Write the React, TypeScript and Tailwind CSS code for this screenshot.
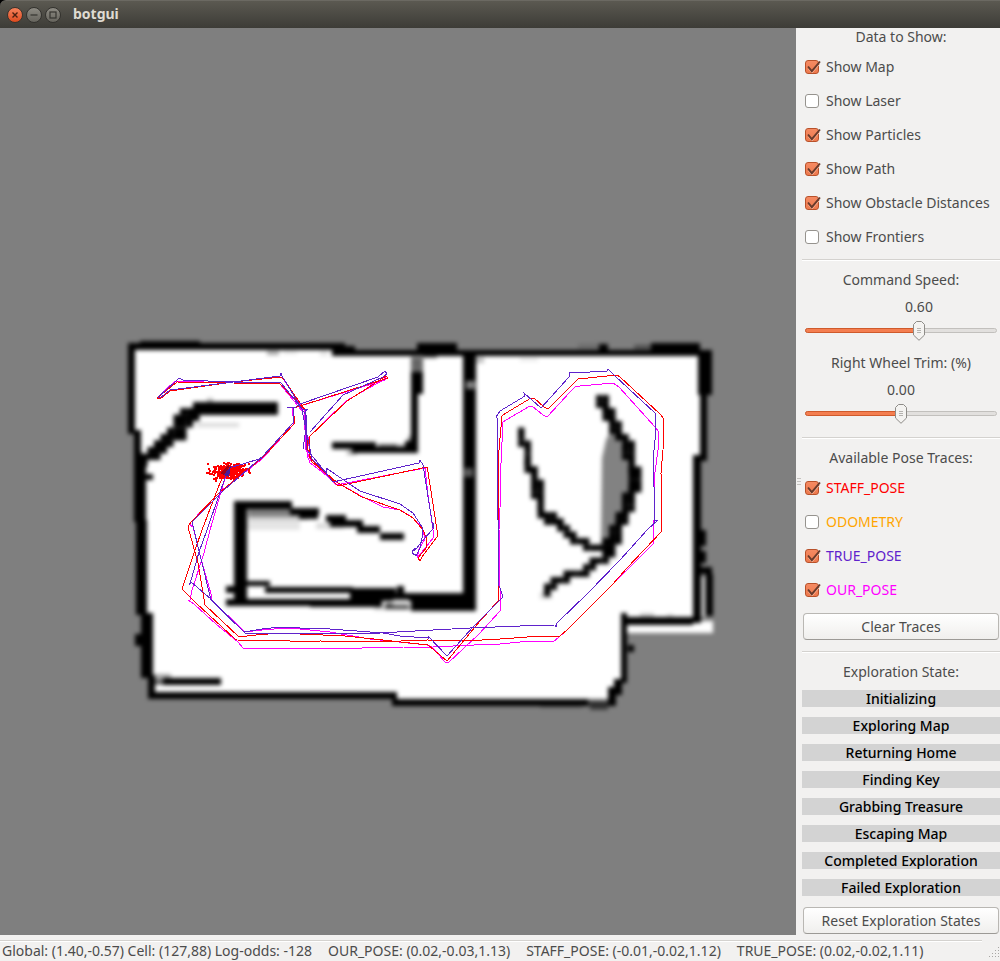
import { useState } from "react";

type Point = [number, number];
type Rect = [number, number, number, number];

const CELL = 6.5;
const RED = "#ff0000";
const PURPLE = "#5f22cc";
const MAGENTA = "#ff00ff";

const FREE_SPACE =
  "132,347 345,347 345,353 700,353 700,460 697,460 697,621 713,621 713,633 627,633 627,683 620,683 612,702 392,702 392,696 151,696 151,677 144,677 144,465 138,433 132,433";

/* Occupied cells: x, y, width, height */
const WALLS: Rect[] = [
  [128, 343, 217, 7],
  [140, 341, 60, 4],
  [128, 343, 7, 91],
  [134, 430, 7, 38],
  [134, 462, 12, 60],
  [140, 474, 13, 6],
  [136, 520, 11, 95],
  [141, 613, 12, 65],
  [135, 634, 8, 12],
  [148, 675, 7, 23],
  [148, 692, 249, 7],
  [392, 699, 196, 7],
  [343, 346, 12, 7],
  [332, 350, 370, 6],
  [417, 343, 40, 8],
  [599, 344, 9, 8],
  [651, 343, 49, 8],
  [698, 350, 14, 45],
  [700, 394, 7, 67],
  [693, 455, 14, 6],
  [693, 455, 8, 168],
  [700, 530, 6, 16],
  [700, 551, 6, 12],
  [698, 567, 14, 7],
  [706, 574, 7, 42],
  [622, 617, 71, 8],
  [621, 613, 6, 70],
  [628, 645, 6, 7],
  [614, 679, 8, 16],
  [608, 687, 8, 19],
  [463, 350, 13, 260],
  [411, 372, 12, 22],
  [411, 392, 7, 61],
  [405, 441, 10, 12],
  [332, 442, 44, 7],
  [352, 447, 66, 6],
  [193, 402, 85, 13],
  [234, 501, 13, 99],
  [234, 501, 58, 8],
  [290, 508, 29, 7],
  [299, 512, 19, 7],
  [326, 515, 20, 7],
  [330, 520, 33, 7],
  [357, 526, 23, 7],
  [380, 533, 24, 7],
  [226, 586, 20, 7],
  [246, 581, 24, 5],
  [265, 587, 88, 6],
  [226, 599, 95, 7],
  [310, 599, 72, 8],
  [350, 588, 46, 12],
  [350, 593, 126, 8],
  [411, 601, 65, 10],
  [397, 586, 7, 8],
  [163, 678, 58, 7],
];

/* Cells with an uncertain occupancy value, with their opacity */
const FAINT: [Rect, number][] = [
  [[155, 674, 16, 9], 0.35],
  [[154, 680, 12, 5], 0.5],
  [[196, 423, 43, 4], 0.15],
  [[207, 398, 6, 5], 0.25],
  [[267, 351, 12, 4], 0.35],
  [[283, 351, 14, 3], 0.1],
  [[320, 351, 8, 5], 0.1],
  [[411, 357, 12, 15], 0.6],
  [[423, 352, 14, 6], 0.6],
  [[347, 450, 10, 5], 0.3],
  [[378, 444, 18, 5], 0.6],
  [[394, 444, 12, 4], 0.3],
  [[408, 436, 8, 6], 0.4],
  [[248, 509, 50, 7], 0.5],
  [[248, 515, 60, 5], 0.22],
  [[246, 520, 54, 10], 0.1],
  [[316, 523, 28, 6], 0.14],
  [[385, 603, 24, 6], 0.7],
  [[374, 606, 40, 4], 0.2],
  [[588, 699, 22, 7], 0.6],
  [[590, 704, 18, 6], 0.5],
  [[540, 705, 42, 3], 0.25],
  [[578, 344, 22, 5], 0.15],
  [[634, 345, 18, 4], 0.4],
  [[520, 358, 18, 3], 0.1],
  [[476, 357, 8, 6], 0.25],
  [[640, 613, 14, 4], 0.2],
  [[667, 614, 6, 3], 0.15],
  [[540, 592, 12, 7], 0.15],
];

const LIGHT: [Rect, number][] = [
  [[301, 593, 46, 6], 0.9],
  [[247, 593, 52, 5], 0.95],
  [[249, 588, 14, 6], 0.7],
  [[393, 599, 16, 7], 0.55],
  [[466, 381, 9, 8], 0.5],
  [[464, 468, 9, 9], 0.35],
  [[701, 577, 4, 40], 0.55],
];

const STAIRS: Point[][] = [
  [[194, 411], [187, 419], [180, 427], [173, 434], [165, 442], [157, 450], [150, 457], [144, 464]],
  [[190, 408], [183, 417], [170, 431], [156, 445], [146, 457]],
  [[198, 414], [190, 424], [182, 433], [172, 441], [163, 449], [153, 458]],
  [[598, 399], [604, 404], [606, 415], [611, 420], [616, 430], [623, 440], [627, 453], [633, 463], [637, 471], [637, 485], [632, 494], [628, 508], [622, 522], [619, 538], [612, 548], [606, 555]],
  [[603, 399], [609, 411], [614, 425], [620, 433], [628, 445], [634, 457]],
  [[632, 470], [632, 486], [624, 508], [617, 524], [614, 538], [604, 548]],
  [[519, 432], [524, 443], [526, 458], [532, 469], [534, 488], [540, 500], [542, 513], [552, 521], [563, 527], [571, 535], [583, 542], [593, 547], [606, 550]],
  [[530, 465], [538, 485], [539, 505], [548, 517], [560, 523]],
  [[608, 556], [598, 561], [586, 568], [578, 575], [566, 577], [556, 583], [549, 586], [545, 592]],
];

function stairCells(line: Point[]): Point[] {
  const cells = new Map<string, Point>();
  for (let i = 0; i < line.length - 1; i++) {
    const [x0, y0] = line[i];
    const [x1, y1] = line[i + 1];
    const n = Math.ceil(Math.hypot(x1 - x0, y1 - y0));
    for (let k = 0; k <= n; k++) {
      const cx = Math.floor((x0 + ((x1 - x0) * k) / n - 128) / CELL);
      const cy = Math.floor((y0 + ((y1 - y0) * k) / n - 343) / CELL);
      cells.set(`${cx},${cy}`, [128 + cx * CELL, 343 + cy * CELL]);
    }
  }
  return [...cells.values()];
}

const STAIR_CELLS = STAIRS.flatMap(stairCells);

const TRACES: { color: string; lines: string[] }[] = [
  {
    color: MAGENTA,
    lines: [
      "227,472 221,492 210,530 204,553 192,590 190,600 188,600 194,604 216,624 238,642 243,648 280,648 284,649 300,648 320,649 404,647 433,647 474,645 500,644 520,642 542,641 553,642 566,631 611,586 653,544 654,520 654,480 658,450 659,432 655,427 619,387 613,383 580,386 576,386 571,391 547,417 543,415 532,406 530,406 506,420 503,422 501,463 500,508 499,530 499,570 501,605 500,611 479,634 448,663 445,662 432,647 427,645 370,639 330,632 300,629 287,628 262,630 245,632 237,624 211,600 211,594 200,555 193,527 189,524 221,491 262,459 294,424 292,408 300,406 385,380 386,377 383,380 346,401 309,437 307,455 310,463 326,475 336,485 425,468 428,495 434,537 421,553 417,558 419,549 425,539 422,527 412,517 400,510 383,507 361,496 333,480 311,461 306,450 304,410 282,377 233,382 171,390 160,399 157,398 175,381 233,383 280,384 303,412",
    ],
  },
  {
    color: RED,
    lines: [
      "225,471 218,488 202,530 194,553 182,589 196,603 235,639 237,640 290,641 298,642 320,641 375,642 427,640 465,641 500,639 541,636 560,636 567,630 612,585 627,568 662,531 661,473 663,450 664,419 660,414 620,377 617,375 578,379 548,409 544,407 534,398 531,398 506,413 502,416 499,450 498,457 498,530 499,600 480,621 447,661 428,645 383,640 345,636 300,634 280,633 256,635 239,637 205,605 198,563 188,527 191,522 220,492 262,458 295,423 293,408 300,406 388,378 386,376 366,389 347,401 309,437 310,458 324,471 338,486 427,467 428,472 437,530 437,537 422,557 420,561 418,558 427,547 426,537 423,530 413,518 400,510 362,497 338,483 312,462 308,450 305,410 282,377 233,382 170,391 160,399 157,398 177,382 233,383 280,384 303,408",
    ],
  },
  {
    color: PURPLE,
    lines: [
      "228,470 220,492 207,530 199,552 190,584 189,585 191,582 211,599 230,618 244,632 262,629 280,627 300,628 330,629 383,633 400,636 428,638 428,636 447,656 473,627 500,600 503,597 501,591 498,583 498,520 497,490 497,418 496,417 500,411 525,396 524,393 541,408 569,377 569,373 590,372 607,371 608,369 615,376 655,413 655,440 653,460 654,487 655,521 658,520 648,529 620,560 587,594 557,623 556,627 555,625 520,626 470,628 415,631 380,633 330,633 245,633 211,600 192,522 224,490 263,456 293,423 293,407 287,407 296,407 300,404 378,377 385,371 387,374 383,377 343,395 310,432",
      "228,468 243,464 262,458",
      "303,449 305,435 305,411 308,409 302,409 282,376 281,373 280,376 233,382 170,390 160,398 158,397 175,382 179,378 183,380 233,382 281,383 299,405 306,415 307,450 318,463 333,482 419,463 420,460 423,465 433,528 434,523 433,529 423,540 417,548 412,552 416,556 420,548 422,538 422,527 413,513 400,504 360,491 326,468 326,472 312,459 302,410",
      "416,548 412,551 413,554 416,555",
    ],
  },
];

function makeParticles(): Point[] {
  let seed = 7;
  const next = () => {
    seed = (seed * 16807) % 2147483647;
    return seed / 2147483647;
  };
  return Array.from({ length: 300 }, () => {
    const dx = (next() + next() + next() - 1.5) * 17;
    const dy = (next() + next() + next() - 1.5) * 7 - dx * 0.12;
    return [Math.round(228 + dx), Math.round(470 + dy)] as Point;
  });
}

const PARTICLES = makeParticles();

function MapView() {
  return (
    <svg
      viewBox="0 28 796 907"
      className="min-w-0 flex-1 bg-[#7f7f7f]"
      role="img"
      aria-label="Occupancy map"
    >
      <g className="blur-[2px]">
        <polygon points={FREE_SPACE} fill="#fff" />
        <polygon
          points="602,458 606,440 612,428 620,440 634,464 636,480 626,510 618,542 606,552 601,545"
          fill="#828282"
        />
        {FAINT.map(([[x, y, w, h], opacity], i) => (
          <rect key={i} x={x} y={y} width={w} height={h} opacity={opacity} />
        ))}
        {WALLS.map(([x, y, w, h], i) => (
          <rect key={i} x={x} y={y} width={w} height={h} />
        ))}
        {STAIR_CELLS.map(([x, y], i) => (
          <rect key={i} x={x} y={y} width={CELL} height={CELL} />
        ))}
        {LIGHT.map(([[x, y, w, h], opacity], i) => (
          <rect key={i} x={x} y={y} width={w} height={h} fill="#fff" opacity={opacity} />
        ))}
      </g>
      <g shapeRendering="crispEdges">
        {PARTICLES.map(([x, y], i) => (
          <rect key={i} x={x} y={y} width="2" height="2" fill={RED} />
        ))}
        {TRACES.map((trace) =>
          trace.lines.map((points, i) => (
            <polyline key={trace.color + i} points={points} fill="none" stroke={trace.color} strokeWidth="1" />
          )),
        )}
        <polygon points="220,473 229,465 227,476" fill="#a00018" />
        <polygon points="224,475 231,465 229,477" fill="#4a1a9a" />
      </g>
    </svg>
  );
}

function CheckRow({ label, initial, color = "text-[#4c4c4c]" }: { label: string; initial: boolean; color?: string }) {
  const [on, setOn] = useState(initial);
  return (
    <label className={`flex h-[34px] items-center gap-1.5 whitespace-nowrap pl-[3px] ${color}`}>
      <span className="grid size-[15px] shrink-0">
        <input
          type="checkbox"
          checked={on}
          onChange={(e) => setOn(e.target.checked)}
          className="col-start-1 row-start-1 size-[14px] appearance-none rounded-[3px] border border-[#96938e] bg-white checked:border-[#b8512a] checked:bg-linear-to-b checked:from-[#f58a62] checked:to-[#ee7a4e]"
        />
        {on && (
          <svg viewBox="0 0 16 16" className="pointer-events-none col-start-1 row-start-1 size-4" fill="none">
            <path d="M3.5 9 L7 13 L14.6 4.2" stroke="#f9b59a" strokeWidth="1" />
            <path d="M3 6.5 L6.8 11.2 L15 1.5" stroke="#693b2c" strokeWidth="1.9" />
          </svg>
        )}
      </span>
      <span>{label}</span>
    </label>
  );
}

function Scale({ label, min, max, initial }: { label: string; min: number; max: number; initial: number }) {
  const [value, setValue] = useState(initial);
  const ratio = (value - min) / (max - min);
  const center = `calc(6px + (100% - 12px) * ${ratio})`;
  return (
    <label className="flex flex-col">
      <span className="text-center">{label}</span>
      <span className="relative mx-[3px] mt-[9px] flex flex-col">
        <span className="flex w-0 justify-center" style={{ marginLeft: center }}>
          {value.toFixed(2)}
        </span>
        <input
          type="range"
          min={min}
          max={max}
          step="0.01"
          value={value}
          onChange={(e) => setValue(Number(e.target.value))}
          className="mt-3 mb-[5px] h-[5px] w-full appearance-none rounded-full border border-[#c2c0bd] bg-[#e2e0de] [&::-webkit-slider-thumb]:h-5 [&::-webkit-slider-thumb]:w-3 [&::-webkit-slider-thumb]:appearance-none [&::-webkit-slider-thumb]:opacity-0"
        />
        <span
          className="pointer-events-none absolute bottom-[5px] left-0 h-[5px] rounded-l-full border border-[#cf5a2c] bg-[#f47e50]"
          style={{ width: center }}
        />
        <svg
          viewBox="0 0 12 20"
          className="pointer-events-none absolute -bottom-[3px] h-5 w-3 -translate-x-1/2"
          style={{ left: center }}
        >
          <path
            d="M3.5 .5 H8.5 L11.5 3.5 V14 L6 19.3 L.5 14 V3.5 Z"
            fill="#f4f3f1"
            stroke="#8e8c88"
            strokeLinejoin="round"
          />
          <path d="M4 7.5 H8 M4 9.5 H8 M4 11.5 H8" stroke="#b5b3b0" />
        </svg>
      </span>
    </label>
  );
}

function Rule() {
  return <hr className="h-0.5 border-t border-b border-t-[#d4d2cf] border-b-white" />;
}

function PushButton({ children }: { children: string }) {
  return (
    <button
      type="button"
      className="mx-px h-[27px] rounded-[4px] border border-[#b9b7b3] border-b-[#9c9a96] bg-linear-to-b from-white to-[#f0efed] whitespace-nowrap"
    >
      {children}
    </button>
  );
}

const DATA_OPTIONS: [string, boolean][] = [
  ["Show Map", true],
  ["Show Laser", false],
  ["Show Particles", true],
  ["Show Path", true],
  ["Show Obstacle Distances", true],
  ["Show Frontiers", false],
];

const POSES: [string, boolean, string][] = [
  ["STAFF_POSE", true, "text-[#ff0000]"],
  ["ODOMETRY", false, "text-[#ffa500]"],
  ["TRUE_POSE", true, "text-[#5f22cc]"],
  ["OUR_POSE", true, "text-[#ff00ff]"],
];

const STATES = [
  "Initializing",
  "Exploring Map",
  "Returning Home",
  "Finding Key",
  "Grabbing Treasure",
  "Escaping Map",
  "Completed Exploration",
  "Failed Exploration",
];

function TitleBar() {
  return (
    <div className="bg-black">
      <header className="flex h-7 items-center rounded-tl-md border-t border-[#6b6962] bg-linear-to-b from-[#5b5951] to-[#3d3c37] pl-[7px]">
        <div className="flex gap-[3px]">
          <button type="button" aria-label="Close" className="size-4 rounded-full border border-[#3a332d] bg-linear-to-b from-[#f5825b] to-[#de4a1c]">
            <svg viewBox="0 0 14 14" className="size-full" fill="none" stroke="#4b2010" strokeWidth="1.4">
              <path d="M4.5 4.5 L9.5 9.5 M9.5 4.5 L4.5 9.5" />
            </svg>
          </button>
          <button type="button" aria-label="Minimize" className="size-4 rounded-full border border-[#33322e] bg-linear-to-b from-[#8d8b83] to-[#66645d]">
            <svg viewBox="0 0 14 14" className="size-full" fill="none" stroke="#35342f" strokeWidth="1.2">
              <path d="M3.5 7 H10.5" />
            </svg>
          </button>
          <button type="button" aria-label="Maximize" className="size-4 rounded-full border border-[#33322e] bg-linear-to-b from-[#8d8b83] to-[#66645d]">
            <svg viewBox="0 0 14 14" className="size-full" fill="none" stroke="#35342f" strokeWidth="1.2">
              <rect x="4" y="4" width="6" height="6" />
            </svg>
          </button>
        </div>
        <h1 className="ml-3 pb-0.5 text-[14px] font-bold text-[#dfdbd2]">botgui</h1>
      </header>
    </div>
  );
}

export default function App() {
  return (
    <div className="flex min-h-screen flex-col bg-[#f2f1f0] font-['Noto_Sans',sans-serif] text-[14px] leading-[18px] text-[#4c4c4c]">
      <TitleBar />
      <div className="flex flex-1">
        <MapView />
        <aside className="relative flex w-[204px] shrink-0 flex-col pb-px pl-1.5">
          <svg viewBox="0 0 4 8" className="absolute top-[450px] left-px h-2 w-1" stroke="#c4c2bf">
            <path d="M0 .5 H4 M0 3.5 H4 M0 6.5 H4" />
          </svg>
          <h2 className="text-center">Data to Show:</h2>
          <div className="mt-1 mb-[5px]">
            {DATA_OPTIONS.map(([label, on]) => (
              <CheckRow key={label} label={label} initial={on} />
            ))}
          </div>
          <Rule />
          <div className="mt-2.5 mb-4 flex flex-col gap-4">
            <Scale label="Command Speed:" min={0} max={1} initial={0.6} />
            <Scale label="Right Wheel Trim: (%)" min={-10} max={10} initial={0} />
          </div>
          <Rule />
          <h2 className="mt-2.5 text-center">Available Pose Traces:</h2>
          <div className="mt-1 mb-1.5">
            {POSES.map(([label, on, color]) => (
              <CheckRow key={label} label={label} initial={on} color={color} />
            ))}
          </div>
          <PushButton>Clear Traces</PushButton>
          <div className="mt-[11px]">
            <Rule />
          </div>
          <h2 className="mt-2.5 text-center">Exploration State:</h2>
          <ul className="mt-[9px] mb-[11px] flex flex-col gap-2.5 text-center leading-[17px] font-medium text-black">
            {STATES.map((state) => (
              <li key={state} className="bg-[#d3d3d3]">
                {state}
              </li>
            ))}
          </ul>
          <PushButton>Reset Exploration States</PushButton>
        </aside>
      </div>
      <footer className="flex h-[26px] flex-col pt-[5px]">
        <div className="mr-[18px]">
          <Rule />
        </div>
        <div className="flex items-center justify-between pl-0.5 whitespace-nowrap">
          <p className="flex gap-4">
            <span>Global: (1.40,-0.57) Cell: (127,88) Log-odds: -128</span>
            <span>OUR_POSE: (0.02,-0.03,1.13)</span>
            <span>STAFF_POSE: (-0.01,-0.02,1.12)</span>
            <span>TRUE_POSE: (0.02,-0.02,1.11)</span>
          </p>
          <svg viewBox="0 0 12 12" className="mt-1 size-3" fill="#a9a7a4">
            {[0, 1, 2, 3].flatMap((row) =>
              Array.from({ length: row + 1 }, (_, col) => (
                <rect key={`${row}-${col}`} x={10 - col * 3} y={row * 3} width="1" height="1" />
              )),
            )}
          </svg>
        </div>
      </footer>
    </div>
  );
}
